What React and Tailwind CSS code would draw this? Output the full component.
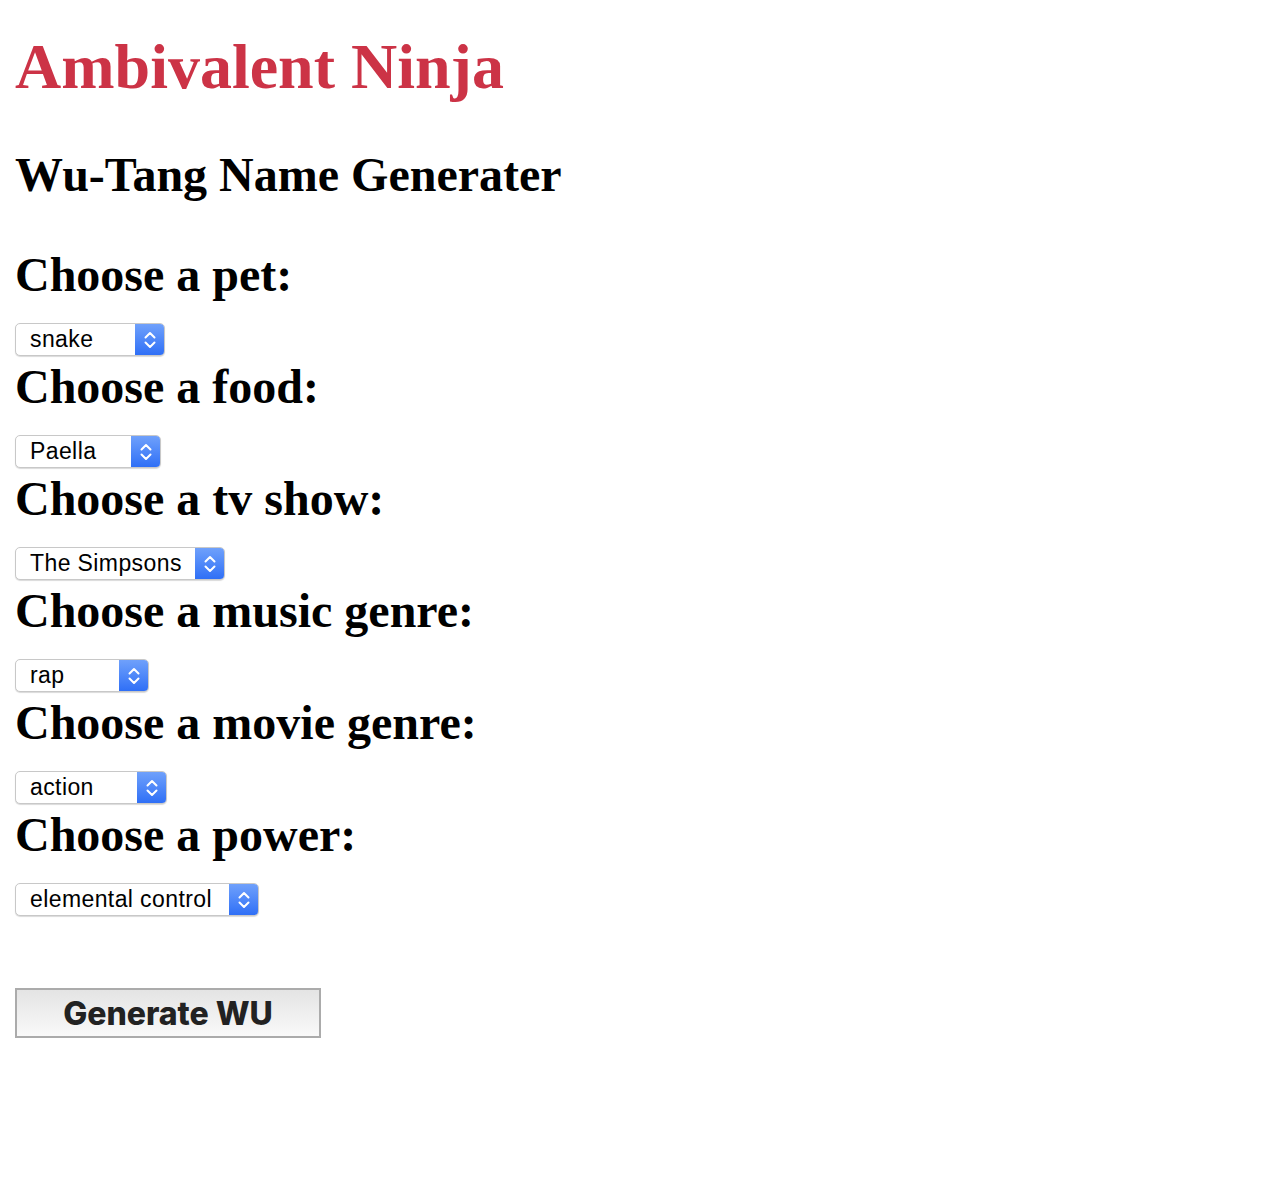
import React from "react";

const fields = [
    { label: "Choose a pet:", value: "snake", width: "w-[150px]" },
    { label: "Choose a food:", value: "Paella", width: "w-[146px]" },
    { label: "Choose a tv show:", value: "The Simpsons", width: "w-[210px]" },
    { label: "Choose a music genre:", value: "rap", width: "w-[134px]" },
    { label: "Choose a movie genre:", value: "action", width: "w-[152px]" },
    { label: "Choose a power:", value: "elemental control", width: "w-[244px]" },
];

function FakeSelect({ value, width }) {
    return (
        <div className={`${width} h-[33px] flex rounded-[5px] border border-[#c8c8c8] bg-white shadow-[0_1px_1px_rgba(0,0,0,0.15)] overflow-hidden`}>
            <div className="flex-1 flex items-center pl-[14px] text-[23px] tracking-[0.4px] text-black font-['Liberation_Sans',sans-serif]">
                {value}
            </div>
            <div className="w-[29px] flex items-center justify-center bg-gradient-to-b from-[#6fa0fb] to-[#2f6ff6]">
                <svg width="12" height="18" viewBox="0 0 12 18" fill="none" stroke="white" strokeWidth="2" strokeLinecap="round" strokeLinejoin="round">
                    <path d="M1.5 6.5 L6 2 L10.5 6.5" />
                    <path d="M1.5 11.5 L6 16 L10.5 11.5" />
                </svg>
            </div>
        </div>
    );
}

function App() {
    return (
        <div className="min-h-[1202px] bg-white px-[15px] pt-[31px] font-['Liberation_Serif',serif]">
            <h1 className="text-[64px] leading-[72px] font-bold text-[#cc3346]">Ambivalent Ninja</h1>

            <h2 className="mt-[44px] text-[48px] leading-[56px] font-bold text-black">Wu-Tang Name Generater</h2>

            <div className="mt-[44px] flex flex-col gap-[3px]">
                {fields.map((f) => (
                    <div key={f.label}>
                        <h3 className="text-[48px] leading-[56px] font-bold text-black">{f.label}</h3>
                        <div className="mt-[20px]">
                            <FakeSelect value={f.value} width={f.width} />
                        </div>
                    </div>
                ))}
            </div>

            <button
                type="button"
                className="mt-[72px] w-[306px] h-[50px] border-2 border-[#ababab] bg-gradient-to-b from-[#e4e4e4] to-[#f9f9f9] text-[32px] font-extrabold text-[#222] font-['Inter',sans-serif]"
            >
                Generate WU
            </button>
        </div>
    );
}

export default App;
